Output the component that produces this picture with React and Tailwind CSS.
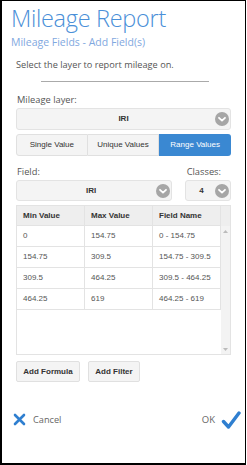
import React from 'react';

const Chevron = ({ size = 14 }) => (
  <svg width={size} height={size} viewBox="0 0 14 14">
    <circle cx="7" cy="7" r="7" fill="#a6a6a6" />
    <path d="M4 5.8 L7 8.6 L10 5.8" stroke="#fff" strokeWidth="1.8" fill="none" strokeLinecap="round" strokeLinejoin="round" />
  </svg>
);

const rows = [
  ['0', '154.75', '0 - 154.75'],
  ['154.75', '309.5', '154.75 - 309.5'],
  ['309.5', '464.25', '309.5 - 464.25'],
  ['464.25', '619', '464.25 - 619'],
];

const arial = { fontFamily: '"Liberation Sans", Arial, sans-serif' };

const App = () => {
  return (
    <div className="w-[247px] h-[465px] bg-white">
      <div
        className="w-[246px] h-[465px] border-t border-r border-l-2 border-b-2 border-black flex flex-col"
        style={{ fontFamily: '"Open Sans", sans-serif' }}
      >
        {/* Header */}
        <div className="pl-[9px] pt-[1px]">
          <h1 className="text-[23.5px] font-light leading-[32px] text-[#4a8fd8] tracking-[-0.3px]">Mileage Report</h1>
          <p className="text-[10.5px] leading-[14px] text-[#7fa8e0] mt-[1px]">Mileage Fields - Add Field(s)</p>
        </div>
        <p className="pl-[14px] mt-[9px] text-[9.2px] leading-[14px] text-[#555]">Select the layer to report mileage on.</p>
        <div className="mx-auto mt-[9px] w-[168px] h-px bg-[#aaa] translate-x-[1px]"></div>

        <div className="px-[14px] mt-[11px]">
          <div className="text-[9.3px] leading-[14px] text-[#555] pl-[1px]">Mileage layer:</div>
          {/* Mileage layer select */}
          <div className="mt-[1px] h-[22px] bg-[#f4f4f4] border border-[#e3e3e3] rounded-[3px] flex items-center relative">
            <span className="flex-1 text-center text-[8px] font-bold text-[#333]" style={arial}>IRI</span>
            <span className="absolute right-[1px] top-[3px]"><Chevron /></span>
          </div>

          {/* Segmented */}
          <div className="mt-[4px] h-[22px] flex text-[8px]" style={arial}>
            <div className="w-[72px] flex items-center justify-center bg-[#f4f4f4] border border-[#e0e0e0] rounded-l-[3px] text-[#333]">Single Value</div>
            <div className="w-[72px] flex items-center justify-center bg-[#f4f4f4] border-y border-r border-[#e0e0e0] text-[#333]">Unique Values</div>
            <div className="w-[72px] flex items-center justify-center bg-[#3a88d2] rounded-r-[3px] text-white">Range Values</div>
          </div>

          {/* Field / Classes */}
          <div className="mt-[9px] flex justify-between text-[9.3px] leading-[14px] text-[#555]">
            <span className="pl-[1px]">Field:</span>
            <span className="pr-[10px]">Classes:</span>
          </div>
          <div className="mt-[1px] flex gap-[13px]">
            <div className="w-[157px] h-[21px] bg-[#f4f4f4] border border-[#e3e3e3] rounded-[3px] flex items-center relative">
              <span className="flex-1 text-center text-[8px] font-bold text-[#333] pr-[6px]" style={arial}>IRI</span>
              <span className="absolute right-[1px] top-[2.5px]"><Chevron /></span>
            </div>
            <div className="w-[46px] h-[21px] bg-[#f4f4f4] border border-[#e3e3e3] rounded-[3px] flex items-center relative">
              <span className="pl-[13px] text-[8px] font-bold text-[#333]" style={arial}>4</span>
              <span className="absolute right-[1px] top-[2.5px]"><Chevron /></span>
            </div>
          </div>

          {/* Table */}
          <div className="mt-[4px] h-[150px] border border-[#e3e3e3] flex text-[8px] text-[#555]" style={arial}>
            <div className="w-[204px] flex flex-col">
              <div className="h-[20px] bg-[#eeeeee] flex font-bold text-[#333] border-b border-[#e3e3e3]">
                <div className="w-[68px] pl-[6px] flex items-center border-r border-[#e3e3e3]">Min Value</div>
                <div className="w-[68px] pl-[6px] flex items-center border-r border-[#e3e3e3]">Max Value</div>
                <div className="w-[68px] pl-[6px] flex items-center border-r border-[#e3e3e3]">Field Name</div>
              </div>
              {rows.map((r, i) => (
                <div key={i} className="h-[21px] flex border-b border-[#e3e3e3]">
                  <div className="w-[68px] pl-[6px] flex items-center border-r border-[#e3e3e3]">{r[0]}</div>
                  <div className="w-[68px] pl-[6px] flex items-center border-r border-[#e3e3e3]">{r[1]}</div>
                  <div className="w-[68px] pl-[6px] flex items-center border-r border-[#e3e3e3]">{r[2]}</div>
                </div>
              ))}
            </div>
            <div className="flex-1 flex flex-col">
              <div className="h-[20px] bg-[#eeeeee]"></div>
              <div className="flex-1 bg-[#f3f3f3] flex flex-col items-center justify-between pt-[4px] pb-[3px]">
                <svg width="5" height="3" viewBox="0 0 5 3"><path d="M0 3 L2.5 0 L5 3Z" fill="#bbb" /></svg>
                <svg width="5" height="3" viewBox="0 0 5 3"><path d="M0 0 L2.5 3 L5 0Z" fill="#bbb" /></svg>
              </div>
            </div>
          </div>

          {/* Buttons */}
          <div className="mt-[6px] flex gap-[8px] text-[8px] font-bold text-[#333]" style={arial}>
            <button className="w-[64px] h-[21px] bg-[#f4f4f4] border border-[#e0e0e0] rounded-[2px]">Add Formula</button>
            <button className="w-[52px] h-[21px] bg-[#f4f4f4] border border-[#e0e0e0] rounded-[2px]">Add Filter</button>
          </div>
        </div>

        {/* Footer */}
        <div className="mt-auto mb-[33px] pl-[11px] pr-[4px] flex items-center justify-between">
          <div className="flex items-center gap-[7px]">
            <svg width="13" height="13" viewBox="0 0 13 13">
              <path d="M2 2 L11 11 M11 2 L2 11" stroke="#2f7fd0" strokeWidth="2.6" strokeLinecap="round" />
            </svg>
            <span className="text-[9.2px] text-[#666]">Cancel</span>
          </div>
          <div className="flex items-center gap-[6px]">
            <span className="text-[9.5px] text-[#666]">OK</span>
            <svg width="20" height="20" viewBox="0 0 20 20">
              <path d="M2.5 11.5 L7.5 17 L18 3" stroke="#2f7fd0" strokeWidth="3.4" fill="none" strokeLinecap="round" strokeLinejoin="round" />
            </svg>
          </div>
        </div>
      </div>
    </div>
  );
};

export default App;
